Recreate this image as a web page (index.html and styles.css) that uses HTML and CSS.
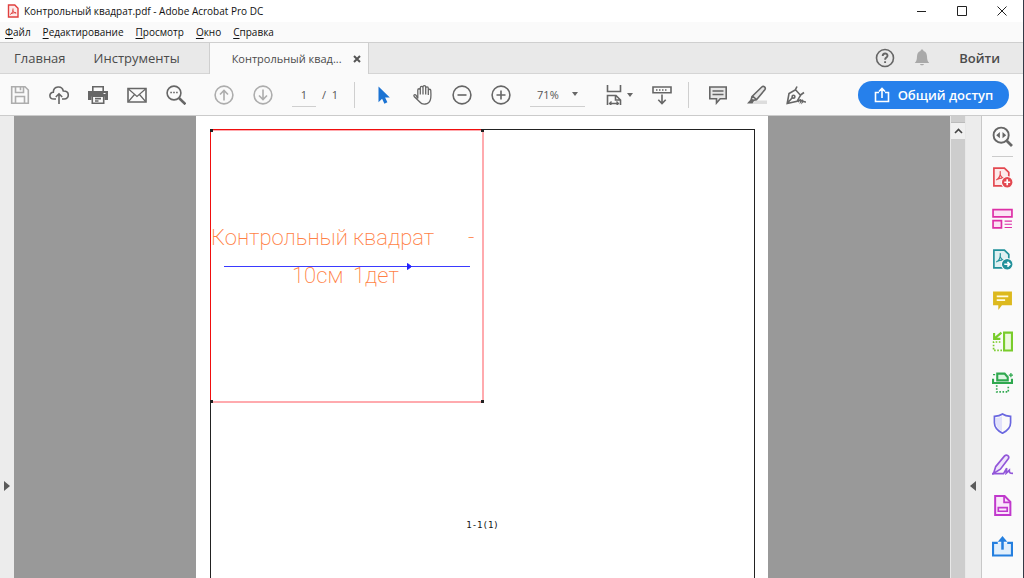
FILE: index.html
```html
<!DOCTYPE html>
<html lang="ru">
<head>
  <meta charset="UTF-8">
  <meta name="viewport" content="width=device-width, initial-scale=1.0">
  <title>Контрольный квадрат.pdf - Adobe Acrobat Pro DC</title>
  <link rel="stylesheet" href="styles.css">
</head>
<body>
<header class="title-bar">
  <svg class="app-icon" viewBox="0 0 12 14"><path d="M1.5 1h6.3L11 4.200V13H1.500z" fill="#fdecec" stroke="#e0403f" stroke-width="1.400"/><path d="M3.500 10.500C5.500 9 6.200 6.500 6 4.500M6 6.500c.8 1.700 1.800 2.400 3.300 2.500M3.500 10c1.500-1 3.500-1.400 5.500-1.200" fill="none" stroke="#e0403f"/></svg>
  <span class="title">Контрольный квадрат.pdf - Adobe Acrobat Pro DC</span>
  <div class="window-buttons">
    <button aria-label="Свернуть"><svg viewBox="0 0 12 12"><path d="M1 6.500h9"/></svg></button>
    <button aria-label="Развернуть"><svg viewBox="0 0 12 12"><path d="M1.500 1.500h9v9h-9z"/></svg></button>
    <button aria-label="Закрыть"><svg viewBox="0 0 12 12"><path d="M1.500 1.500l9 9M10.500 1.500l-9 9"/></svg></button>
  </div>
</header>

<nav class="menu-bar">
  <button><u>Ф</u>айл</button>
  <button><u>Р</u>едактирование</button>
  <button><u>П</u>росмотр</button>
  <button><u>О</u>кно</button>
  <button><u>С</u>правка</button>
</nav>

<div class="tab-bar">
  <button class="tab home">Главная</button>
  <button class="tab tools-tab">Инструменты</button>
  <div class="tab active">
    <span>Контрольный квад...</span>
    <button class="tab-close" aria-label="Закрыть вкладку"><svg viewBox="0 0 8 8"><path d="M1 1l6 6M7 1L1 7"/></svg></button>
  </div>
  <div class="account">
    <button class="icon" aria-label="Помощь"><svg viewBox="0 0 20 20"><circle cx="10" cy="10" r="8.500"/><path d="M7.700 8c0-3.200 4.800-3.200 4.800-.3 0 1.900-2.400 1.900-2.400 4M10.100 13.300v1.700" stroke-width="1.900"/></svg></button>
    <button class="icon bell" aria-label="Уведомления"><svg viewBox="0 0 20 20"><path d="M10 1.500c1 0 1.500.6 1.500 1.500 2.500.8 3.400 3 3.500 5.500.1 3.500.7 4.800 2.200 6.500H2.800C4.300 13.300 4.900 12 5 8.500 5.100 6 6 3.800 8.500 3c0-.9.5-1.500 1.500-1.500zM8 16h4c-.2 1.800-3.800 1.800-4 0z"/></svg></button>
    <button class="login">Войти</button>
  </div>
</div>

<div class="toolbar">
  <div class="group">
    <button class="icon pale" aria-label="Сохранить"><svg viewBox="0 0 20 20"><path d="M1.700 1.700h13.300l3.300 3.300v13.300H1.700zM5.500 2v5.500h8V2M10.500 2.500v2.700M5.500 18v-6.500h9V18"/></svg></button>
    <button class="icon" aria-label="Загрузить в облако"><svg viewBox="0 0 20 20"><path d="M7 14H5C-.5 14-.2 7.300 4.300 7.300 4.500.8 13 .3 14.300 6c6.700-.2 6.300 8 .9 8H13M10 19V9M6.800 12L10 8.800l3.200 3.200"/></svg></button>
    <button class="icon" aria-label="Печать"><svg viewBox="0 0 20 20"><path d="M4.800 6V1.800h10.400V6" /><path d="M0 6h20v9h-3.500v-3.500h-13V15H0z" fill="#666" stroke="none"/><path d="M4.300 11.300h11.400v7H4.300zM7 13.600h6M7 16h3.500" fill="#fafafa"/><path d="M15.500 8.500h2" stroke="#fafafa" stroke-width="1"/></svg></button>
    <button class="icon" aria-label="Отправить по почте"><svg viewBox="0 0 20 20"><path d="M1 3.500h18v13.500H1z"/><path d="M1.500 4l8.500 7.500L18.500 4M1.500 16.500l6-7M18.500 16.500l-6-7" stroke-width="1.200"/></svg></button>
    <button class="icon" aria-label="Найти"><svg viewBox="0 0 20 20"><circle cx="8" cy="8" r="6.900"/><path d="M13 13l6.500 6.300" stroke-width="2.600"/><path d="M4.300 7.500h1.600M7.200 7.500h1.600M10.100 7.500h1.600"/></svg></button>
  </div>
  <div class="group">
    <button class="icon pale" aria-label="Предыдущая страница"><svg viewBox="0 0 20 20"><circle cx="10" cy="10" r="8.900"/><path d="M10 15.500V5.500M6 9.500l4-4 4 4"/></svg></button>
    <button class="icon pale" aria-label="Следующая страница"><svg viewBox="0 0 20 20"><circle cx="10" cy="10" r="8.900"/><path d="M10 4.500v10M6 10.500l4 4 4-4"/></svg></button>
    <div class="pages">
      <input class="page-input" type="text" value="1" aria-label="Страница">
      <span>/&nbsp; 1</span>
    </div>
  </div>
  <div class="group divided">
    <button class="icon" aria-label="Выделение"><svg viewBox="0 0 20 20"><path d="M4.500 1.500v15.700l3.600-3.500 2.300 5 3-1.400-2.300-4.700h4.700z" fill="#1b73d3" stroke="none"/></svg></button>
    <button class="icon" aria-label="Рука"><svg viewBox="0 0 20 20"><path d="M4.800 13.500V5c0-1.700 2.500-1.700 2.500 0v4.500V2.700c0-1.800 2.700-1.800 2.700 0v6.800V2c0-1.800 2.700-1.800 2.700 0v7.500V3.200c0-1.800 2.600-1.800 2.600 0V10V5.500c0-1.700 2.500-1.700 2.500 0 0 3.500.6 6.500-.5 9.500-1.600 4.800-8 5.200-10.500 2L1.200 11.500C.2 9.700 2 8.900 3.100 10.300L4.800 13.500" stroke-width="1.300"/></svg></button>
    <button class="icon" aria-label="Уменьшить"><svg viewBox="0 0 20 20"><circle cx="10" cy="10" r="8.900"/><path d="M5.500 10h9"/></svg></button>
    <button class="icon" aria-label="Увеличить"><svg viewBox="0 0 20 20"><circle cx="10" cy="10" r="8.900"/><path d="M5.500 10h9M10 5.500v9"/></svg></button>
    <div class="zoom">
      <select aria-label="Масштаб"><option>71%</option><option>100%</option></select>
      <svg class="arrow" viewBox="0 0 6 4"><path d="M0 0h6L3 4z"/></svg>
    </div>
    <button class="icon fit" aria-label="По ширине"><svg viewBox="0 0 20 20"><path d="M3.500 0v6.500h13V0M3.500 20v-9.500H12l4.500 4.500v5M11.500 10.500V15h5"/><path d="M5.500 18.500h9M7.500 16.500l-2 2 2 2M12.500 16.500l2 2-2 2" stroke-width="1.300"/></svg><svg class="arrow" viewBox="0 0 6 4"><path d="M0 0h6L3 4z"/></svg></button>
    <button class="icon" aria-label="Прокрутка"><svg viewBox="0 0 20 20"><path d="M1 2h18v5.800H1zM10 9.500v9M6.300 14.800l3.700 3.700 3.700-3.700"/><path d="M4 5h12" stroke-dasharray="1.500 1.500"/></svg></button>
  </div>
  <div class="group divided">
    <button class="icon" aria-label="Комментарий"><svg viewBox="0 0 20 20"><path d="M1.800 2h16.400v11.800h-6L8.500 18v-4.200H1.800z" fill="#e6e6e6"/><path d="M4.500 6h11M4.500 9.500h11" stroke-width="1.300"/></svg></button>
    <button class="icon" aria-label="Выделить текст"><svg viewBox="0 0 20 20"><path d="M8 15.500h12v3.500H5z" fill="#ddd" stroke="none"/><path d="M5 11.500L14.800 2c1.800-1.700 4.500.6 3 2.700L9.500 14.800l-3.700.5-1.500-1.200zM5.500 11.200l4 3.300" fill="#e6e6e6"/><path d="M4 14l3 2-1.500 2.500H0z" fill="#666" stroke="none"/></svg></button>
    <button class="icon" aria-label="Подписать"><svg viewBox="0 0 20 20"><path d="M1.200 18.500L3 8.500l6.500-3.700 5 5.500-3.500 6zM1.500 18l5-5.500M9.300 4.800L11 1.500M14.500 10l3.500-2.500M12 17c2-3 3-3 2.700-.5 1.500-2 2.300-1.500 1.800.5 1-1 1.600-.3 3.500 0"/><circle cx="7.500" cy="11.700" r="1.400"/></svg></button>
  </div>
  <button class="share"><svg viewBox="0 0 16 16"><path d="M5 5.500H1.500v9h13v-9H11M8 11V2M5 4.500l3-3 3 3"/></svg>Общий доступ</button>
</div>

<main class="workspace">
  <button class="side-handle left" aria-label="Открыть панель"><svg viewBox="0 0 6 10"><path d="M0 0l6 5-6 5z"/></svg></button>
  <section class="canvas">
    <div class="page">
      <div class="frame">
        <svg class="pattern" viewBox="0 0 274 274">
          <path d="M273 1v272H0" stroke="#ffaaae" stroke-width="2"/>
          <path d="M.5 274V.5H274" stroke="#f00e0e"/>
          <path d="M1 1.500h271" stroke="#ffaaae"/>
          <g class="pattern-text">
            <text x="1" y="116">Контрольный</text>
            <text x="143" y="116">квадрат</text>
            <text x="258" y="116">-</text>
            <text x="82" y="154">10см</text>
            <text x="143" y="154">1дет</text>
          </g>
          <path d="M14 137.500h246" stroke="#3a3aff"/>
          <path d="M197.500 134.500l4 3-4 3z" fill="#22f" stroke="#22f"/>
          <path d="M0 0h3v3H0zM271 0h3v3h-3zM0 271h3v3H0zM271 271h3v3h-3z" fill="#222"/>
        </svg>
        <span class="page-label">1-1(1)</span>
      </div>
    </div>
  </section>
  <div class="scrollbar">
    <button aria-label="Вверх"><svg viewBox="0 0 9 6"><path d="M1 5l3.500-3.500L8 5"/></svg></button>
  </div>
  <button class="side-handle right" aria-label="Скрыть панель"><svg viewBox="0 0 6 10"><path d="M6 0L0 5l6 5z"/></svg></button>
  <aside class="tool-panel">
    <button class="first" aria-label="Поиск инструментов"><svg viewBox="0 0 20 20" stroke="#666"><circle cx="8.700" cy="8.700" r="7.200" stroke-width="1.800"/><path d="M14 14l5 5" stroke-width="2.600"/><path d="M7.500 5.800v5.800L4 8.700zM10 5.800v5.800l3.500-2.900z" fill="#666" stroke="none"/></svg></button>
    <button aria-label="Создать PDF"><svg viewBox="0 0 20 20" stroke="#e34850"><path d="M1.800 1h10l4.200 4.200V18H1.800z" fill="#fdeaea"/><path d="M4 12.500c3-1.800 4.300-5 3.800-8.500M7.800 7c.9 2.700 2.500 4 5 4.200M4.500 12c2.500-1.500 5-1.800 8-1.500" stroke-width="1.100"/><circle cx="14.500" cy="14.500" r="5.500" fill="#e34850" stroke="#fafafa" stroke-width="1"/><path d="M14.500 11.700v5.600M11.700 14.500h5.600" stroke="#fff"/></svg></button>
    <button aria-label="Объединить файлы"><svg viewBox="0 0 20 20" stroke="#dd2fa6"><path d="M1 1.500h18v7H1zM1 12h8v7H1z" fill="#fbe3f4"/><path d="M12 12.500h7M12 15.500h7M12 18.500h7" stroke-width="1"/></svg></button>
    <button aria-label="Экспорт PDF"><svg viewBox="0 0 20 20" stroke="#21919a"><path d="M1.800 1h10l4.200 4.200V18H1.800z" fill="#dff1f2"/><path d="M4 12.500c3-1.800 4.300-5 3.800-8.500M7.800 7c.9 2.700 2.500 4 5 4.200M4.500 12c2.500-1.500 5-1.800 8-1.500" stroke-width="1.100"/><circle cx="14.500" cy="14.500" r="5.500" fill="#21919a" stroke="#fafafa" stroke-width="1"/><path d="M11.700 14.500h5M14.700 12.300l2.200 2.200-2.200 2.200" stroke="#fff"/></svg></button>
    <button aria-label="Комментарий"><svg viewBox="0 0 20 20"><path d="M1 1.500h18v13h-9.500L6 19v-4.500H1z" fill="#ddb91e"/><path d="M4.500 6h11M4.500 9.700h8" stroke="#fffbe0"/></svg></button>
    <button aria-label="Систематизировать страницы"><svg viewBox="0 0 20 20" stroke="#79cc2b"><path d="M11.500 1.500H19v17h-7.500z" fill="#eefadf" stroke-width="2"/><path d="M8 10.500H1.500v8H10" stroke-dasharray="1.500 1.500"/><path d="M9 1.500L2.500 7M2 2v5.500h6" stroke-width="2"/></svg></button>
    <button aria-label="Сканирование"><svg viewBox="0 0 20 20" stroke="#2fa84f"><path d="M5 8V1.500h7L15 5v3z" fill="#def5e3" stroke-width="2"/><path d="M1 6.500v4h18v-4" stroke-width="2"/><path d="M4.500 12.500v6.500h11v-6.500" stroke-dasharray="1.500 1.500"/><path d="M1 2.500h2M18 1v4M16 3h4" stroke-width="1.200"/></svg></button>
    <button aria-label="Защитить"><svg viewBox="0 0 20 20" stroke="#6a67e0"><path d="M10 1c2.500 1.700 5 2 7.700 2.200v6c0 4.500-3 7.600-7.700 10-4.700-2.400-7.700-5.500-7.700-10v-6C5 3 7.500 2.700 10 1z"/><path d="M9.500 3v14.500C6 15.500 3.800 13 3.800 9V4.700C6 4.500 7.800 4.100 9.500 3z" fill="#e1e1fb" stroke="none"/></svg></button>
    <button aria-label="Заполнить и подписать"><svg viewBox="0 0 20 20" stroke="#9256d9"><path d="M3.500 12L12 1.800c2-2 5 .3 3.500 2.700L8 14.500l-6.500 4z" fill="#efe4fb"/><path d="M0 18.700h11l3-5.200-.5 4.800 3-2.800c0 2.500.5 3 3.500 3"/></svg></button>
    <button aria-label="Формы"><svg viewBox="0 0 20 20" stroke="#c038cc"><path d="M3 1h9l5.500 5.500V19H3z" fill="#fae6fb" stroke-width="1.900"/><path d="M11.500 1v6h6M6 12h8.500v3.500H6z"/></svg></button>
    <button aria-label="Отправить"><svg viewBox="0 0 20 20" stroke="#247fdf"><path d="M5.500 6.500H1v12h18v-12h-4.500" fill="#e1effc" stroke-width="2"/><path d="M10 13V3.500" stroke-width="2.400"/><path d="M10 0l4.500 5.500h-9z" fill="#247fdf" stroke="none"/></svg></button>
  </aside>
</main>
</body>
</html>
```
FILE: styles.css
```css
* {
  box-sizing: border-box;
}

body {
  margin: 0;
  height: 100vh;
  display: flex;
  flex-direction: column;
  overflow: hidden;
  background-color: #fafafa;
  color: #111;
  border-right: 1px solid #343a46;
  font-family: "Open Sans", "Noto Sans", sans-serif;
  font-size: 10px;
}

button {
  border: 0;
  padding: 0;
  background: none;
  color: inherit;
  font: inherit;
  cursor: pointer;
}

svg {
  display: block;
  fill: none;
}

.title-bar {
  height: 22px;
  flex-shrink: 0;
  display: flex;
  align-items: center;
  padding: 0 15px 0 7px;
  background-color: white;
}

.app-icon {
  width: 12px;
  height: 14px;
  margin-right: 5px;
}

.window-buttons {
  display: flex;
  gap: 28px;
  margin-left: auto;
}

.window-buttons svg {
  width: 12px;
  height: 12px;
  stroke: #222;
}

.menu-bar {
  height: 20px;
  flex-shrink: 0;
  display: flex;
  align-items: center;
  gap: 12px;
  padding: 0 5px;
}

.menu-bar u {
  text-underline-offset: 2px;
}

.tab-bar {
  height: 32px;
  flex-shrink: 0;
  display: flex;
  background-color: #e9e9e9;
  border-top: 1px solid #cfcfcf;
  color: #4b4b4b;
  font-size: 13px;
}

.tab {
  border-bottom: 1px solid #d5d5d5;
}

.tab.home {
  padding: 0 14px;
}

.tab.tools-tab {
  padding: 0 29px 0 14px;
}

.tab.active {
  display: flex;
  align-items: center;
  justify-content: space-between;
  padding: 0 7px 0 22px;
  width: 160px;
  background-color: #fafafa;
  border-left: 1px solid #cfcfcf;
  border-right: 1px solid #cfcfcf;
  border-bottom: 0;
  font-size: 11px;
  white-space: nowrap;
}

.tab-close svg {
  width: 8px;
  height: 8px;
  stroke: #555;
  stroke-width: 2;
}

.account {
  flex: 1;
  display: flex;
  align-items: center;
  justify-content: flex-end;
  gap: 17px;
  padding-right: 23px;
  border-bottom: 1px solid #d5d5d5;
}

.login {
  margin-left: 10px;
  font-weight: 600;
}

.icon svg {
  width: 20px;
  height: 20px;
  stroke: #666;
  stroke-width: 1.6;
}

.icon.pale svg {
  stroke: #adadad;
}

.icon.bell svg {
  fill: #a9a9a9;
  stroke: none;
}

.toolbar {
  height: 42px;
  flex-shrink: 0;
  display: flex;
  align-items: center;
  gap: 28px;
  padding: 0 14px 0 10px;
  border-bottom: 1px solid #cbcbcb;
  font-size: 11px;
}

.group {
  display: flex;
  align-items: center;
  gap: 19px;
}

.group.divided {
  height: 26px;
  margin-left: -12px;
  padding-left: 19px;
  border-left: 1px solid #cfcfcf;
}

.pages {
  display: flex;
  align-items: center;
  gap: 6px;
  color: #555;
}

.page-input {
  width: 24px;
  height: 25px;
  padding: 0;
  border: 0;
  border-bottom: 1px solid #cfcfcf;
  background: none;
  color: #555;
  font: inherit;
  text-align: center;
}

.zoom {
  display: flex;
  align-items: center;
  width: 55px;
  height: 25px;
  padding: 0 7px;
  border-bottom: 1px solid #cfcfcf;
}

.zoom select {
  flex: 1;
  min-width: 0;
  padding: 0;
  border: 0;
  appearance: none;
  background: none;
  color: #555;
  font: inherit;
}

svg.arrow {
  width: 6px;
  height: 4px;
  fill: #666;
  stroke: none;
}

.icon.fit {
  display: flex;
  align-items: center;
  gap: 3px;
}

.share {
  display: flex;
  align-items: center;
  justify-content: center;
  gap: 8px;
  width: 151px;
  height: 28px;
  margin-left: auto;
  border-radius: 14px;
  background-color: #2680eb;
  color: white;
  font-size: 13px;
  font-weight: 600;
}

.share svg {
  width: 16px;
  height: 16px;
  stroke: white;
  stroke-width: 1.6;
}

.workspace {
  flex: 1;
  min-height: 0;
  display: flex;
}

.side-handle {
  display: flex;
  align-items: center;
  width: 14px;
  padding: 278px 0 0 4px;
  background-color: #ececec;
}

.side-handle.right {
  width: 16px;
  border-right: 1px solid #c8c8c8;
}

.side-handle svg {
  width: 6px;
  height: 10px;
  fill: #5a5a5a;
}

.canvas {
  flex: 1;
  display: flex;
  justify-content: center;
  align-items: flex-start;
  overflow: hidden;
  background-color: #999;
}

.page {
  width: 572px;
  padding: 13px 13px 13px 14px;
  background-color: white;
}

.frame {
  display: flex;
  flex-direction: column;
  align-items: center;
  height: 780px;
  border: 1px solid #222;
}

/* the square covers the frame's own top left corner */
.pattern {
  align-self: flex-start;
  flex-shrink: 0;
  width: 274px;
  height: 274px;
  margin: -1px 0 0 -1px;
}

.pattern-text {
  fill: #ff7f45;
  font-family: Roboto, "Noto Sans", sans-serif;
  font-size: 22px;
  font-weight: 200;
}

.page-label {
  margin-top: 117px;
  font-family: "DejaVu Sans Mono", monospace;
  font-size: 9px;
}

.scrollbar {
  width: 16px;
  padding-top: 6px;
  background-color: #cdcdcd;
  border-left: 1px solid #e8e8e8;
  border-right: 1px solid #e8e8e8;
}

.scrollbar button {
  display: flex;
  align-items: center;
  justify-content: center;
  width: 100%;
  height: 17px;
  background-color: #f0f0f0;
  border-top: 1px solid #bbb;
}

.scrollbar svg {
  width: 9px;
  height: 6px;
  stroke: #444;
  stroke-width: 1.6;
}

.tool-panel {
  display: flex;
  flex-direction: column;
  align-items: center;
  gap: 20px;
  width: 41px;
  padding-top: 10px;
}

.tool-panel svg {
  width: 21px;
  height: 21px;
  stroke-width: 1.6;
}

.tool-panel .first {
  padding-bottom: 9px;
  margin-bottom: -10px;
  border-bottom: 1px solid #cbcbcb;
}
```
